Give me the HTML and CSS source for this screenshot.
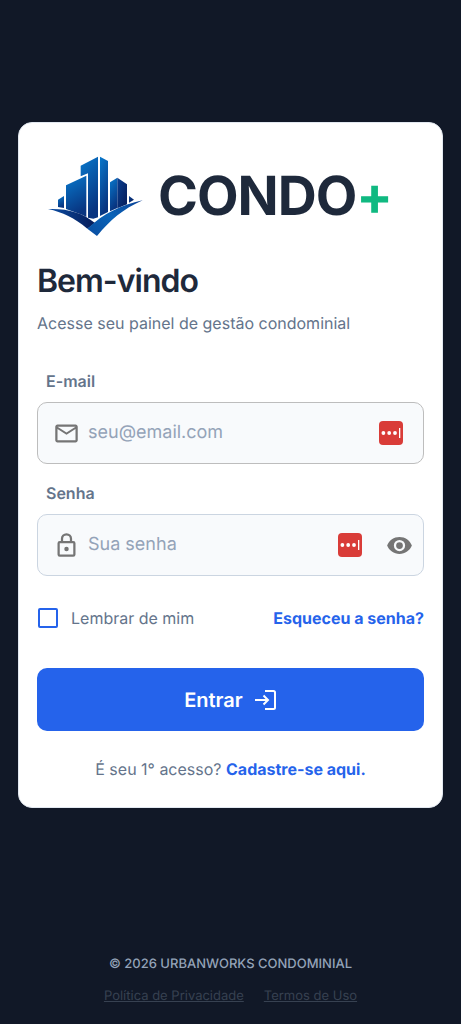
FILE: index.html
```html
<!DOCTYPE html>
<html lang="pt-BR">
<head>
<meta charset="utf-8">
<meta name="viewport" content="width=device-width, initial-scale=1">
<title>Condo+</title>
<link rel="stylesheet" href="styles.css">
</head>
<body>
<main class="main">
  <section class="card">
    <div class="brand">
      <svg class="brand-mark" viewBox="24 24 288 246" aria-hidden="true">
        <defs>
          <linearGradient id="tower" x1="0" y1="0" x2="0.3" y2="1"><stop offset="0" stop-color="#0878cc"/><stop offset="1" stop-color="#083480"/></linearGradient>
          <linearGradient id="dark" x1="0" y1="0" x2="1" y2="1"><stop offset="0" stop-color="#0a3f91"/><stop offset="1" stop-color="#061c58"/></linearGradient>
          <linearGradient id="left" x1="0" y1="0" x2="1" y2="0"><stop offset="0" stop-color="#0b4ea5"/><stop offset="1" stop-color="#051b58"/></linearGradient>
          <linearGradient id="right" x1="1" y1="0" x2="0" y2="1"><stop offset="0" stop-color="#0a3f94"/><stop offset="0.5" stop-color="#0963b8"/><stop offset="1" stop-color="#0a4da0"/></linearGradient>
        </defs>
        <path fill="url(#tower)" d="M54 155l18-11v36l-18-3z"/>
        <path fill="url(#tower)" d="M78 112l61-29v124l-11-6-50-18z"/>
        <path fill="url(#tower)" d="M122 53l52-27v182l-14 4-16-3V76l-22 9z"/>
        <path fill="url(#tower)" d="M180 26l24 13v153l-24 12z"/>
        <path fill="url(#tower)" d="M210 103l22-14v91l-22 10z"/>
        <path fill="url(#dark)" d="M232 89l29 20v60l-29 12z"/>
        <path fill="url(#dark)" d="M267 144l15 11-15 9z"/>
        <path fill="url(#left)" d="M24 183c60-2 103 11 141 42l-23 17C103 209 68 193 24 183z"/>
        <path fill="url(#right)" d="M308 157c-65 14-116 39-166 85l29 22c41-49 77-80 137-107z"/>
      </svg>
      <span class="brand-name">CONDO<span class="plus">+</span></span>
    </div>
    <h1 class="title">Bem-vindo</h1>
    <p class="subtitle">Acesse seu painel de gestão condominial</p>
    <form class="form">
      <label class="label" for="email">E-mail</label>
      <div class="field field-email">
        <svg class="icon" viewBox="0 0 24 24" aria-hidden="true"><path d="M22 6c0-1.100-.9-2-2-2H4c-1.100 0-2 .9-2 2v12c0 1.100.9 2 2 2h16c1.100 0 2-.9 2-2V6zm-2 0l-8 5-8-5h16zm0 12H4V8l8 5 8-5v10z"/></svg>
        <input class="input" id="email" type="email" placeholder="seu@email.com">
        <svg class="vault" viewBox="0 0 24 24" aria-hidden="true"><rect width="24" height="24" rx="4" fill="#d93c38"/><path fill="#fff" d="M2.500 12a1.900 1.900 0 1 0 3.800 0 1.900 1.900 0 1 0-3.800 0zm5.800 0a1.900 1.900 0 1 0 3.800 0 1.900 1.900 0 1 0-3.800 0zm5.800 0a1.900 1.900 0 1 0 3.800 0 1.900 1.900 0 1 0-3.800 0zM20 7h1.300v10H20z"/></svg>
      </div>
      <label class="label" for="senha">Senha</label>
      <div class="field field-password">
        <svg class="icon" viewBox="0 0 24 24" aria-hidden="true"><path d="M18 8h-1V6A5 5 0 0 0 7 6v2H6a2 2 0 0 0-2 2v10a2 2 0 0 0 2 2h12a2 2 0 0 0 2-2V10a2 2 0 0 0-2-2zM9 6a3 3 0 0 1 6 0v2H9V6zm9 14H6V10h12v10zm-6-3a2 2 0 1 0 0-4 2 2 0 0 0 0 4z"/></svg>
        <input class="input" id="senha" type="password" placeholder="Sua senha">
        <svg class="vault" viewBox="0 0 24 24" aria-hidden="true"><rect width="24" height="24" rx="4" fill="#d93c38"/><path fill="#fff" d="M2.500 12a1.900 1.900 0 1 0 3.800 0 1.900 1.900 0 1 0-3.800 0zm5.800 0a1.900 1.900 0 1 0 3.800 0 1.900 1.900 0 1 0-3.800 0zm5.800 0a1.900 1.900 0 1 0 3.800 0 1.900 1.900 0 1 0-3.800 0zM20 7h1.300v10H20z"/></svg>
        <button class="reveal" type="button" aria-label="Mostrar senha"><svg class="icon" viewBox="0 0 24 24" aria-hidden="true"><path d="M12 4.500C7 4.500 2.730 7.610 1 12c1.730 4.390 6 7.500 11 7.500s9.270-3.110 11-7.500c-1.730-4.390-6-7.500-11-7.500zM12 17a5 5 0 1 1 0-10 5 5 0 0 1 0 10zm0-8a3 3 0 1 0 0 6 3 3 0 0 0 0-6z"/></svg></button>
      </div>
      <div class="options">
        <label class="remember"><input class="check" type="checkbox">Lembrar de mim</label>
        <a class="link" href="#">Esqueceu a senha?</a>
      </div>
      <button class="submit" type="submit">Entrar
        <svg class="submit-icon" viewBox="0 0 24 24" aria-hidden="true"><path d="M12 3h8.500a1.500 1.500 0 0 1 1.500 1.500v15a1.500 1.500 0 0 1-1.500 1.500H12M2 12h13M10.500 7.500L15 12l-4.500 4.500"/></svg>
      </button>
    </form>
    <p class="signup">É seu 1° acesso? <a class="link" href="#">Cadastre-se aqui.</a></p>
  </section>
</main>
<footer class="footer">
  <p class="copyright">© 2026 URBANWORKS CONDOMINIAL</p>
  <nav class="legal"><a class="legal-link" href="#">Política de Privacidade</a><a class="legal-link" href="#">Termos de Uso</a></nav>
</footer>
</body>
</html>
```
FILE: styles.css
```css
* { box-sizing: border-box; }
body {
  display: flex;
  flex-direction: column;
  min-height: 100vh;
  margin: 0;
  background: #111827;
  color: #64748b;
  font: 16px/24px Inter, "Liberation Sans", sans-serif;
  text-rendering: geometricPrecision;
}
h1, p { margin: 0; }
button, input { font: inherit; text-rendering: inherit; }
.main {
  display: flex;
  flex: 1;
  align-items: center;
  justify-content: center;
  padding: 18px;
}
.card {
  width: 100%;
  max-width: 450px;
  padding: 33px 18px 26px;
  border: 1px solid #e2e8f0;
  border-radius: 14px;
  background: #fff;
}
.brand {
  display: flex;
  align-items: center;
  gap: 14px;
  margin-left: 11px;
}
.brand-mark { flex: none; width: 96px; height: 82px; }
.brand-name {
  color: #1e293b;
  font-size: 54px;
  font-weight: 700;
  line-height: 64px;
  letter-spacing: -1px;
}
.plus { color: #10b981; }
.title {
  margin-top: 23px;
  color: #1e293b;
  font-size: 32px;
  font-weight: 600;
  line-height: 40px;
  letter-spacing: -1px;
}
.subtitle { margin-top: 10px; }
.form { margin-top: 34px; }
.label {
  display: block;
  margin-left: 9px;
  font-weight: 600;
}
.field {
  display: flex;
  align-items: center;
  height: 62px;
  margin: 9px 0 17px;
  padding-left: 15px;
  border: 1px solid #cbd5e1;
  border-radius: 10px;
  background: #f8fafc;
}
.field-email { padding-right: 20px; border-color: #bdbdbd; }
.field-password { padding-right: 10px; }
.icon {
  display: block;
  flex: none;
  width: 27px;
  height: 27px;
  fill: #757575;
}
.input {
  flex: 1;
  min-width: 0;
  padding: 0 8px;
  border: 0;
  outline: 0;
  background: transparent;
  color: #1e293b;
  font-size: 18px;
}
.input::placeholder { color: #94a3b8; opacity: 1; }
.vault { flex: none; width: 24px; height: 24px; }
.reveal {
  margin-left: 24px;
  padding: 0;
  border: 0;
  background: transparent;
}
.options {
  display: flex;
  align-items: center;
  justify-content: space-between;
  margin-top: 30px;
}
.remember { display: flex; align-items: center; gap: 13px; }
.check {
  appearance: none;
  width: 20px;
  height: 20px;
  margin: 0 0 0 1px;
  border: 2px solid #2563eb;
  border-radius: 2px;
}
.check:checked { background: #2563eb; }
.link { color: #2563eb; font-weight: 700; text-decoration: none; }
.submit {
  display: flex;
  align-items: center;
  justify-content: center;
  gap: 10px;
  width: 100%;
  height: 63px;
  margin-top: 38px;
  padding: 0;
  border: 0;
  border-radius: 10px;
  background: #2563eb;
  color: #fff;
  font-size: 20px;
  font-weight: 600;
}
.submit-icon {
  width: 24px;
  height: 24px;
  fill: none;
  stroke: #fff;
  stroke-width: 2;
}
.signup { margin-top: 26px; text-align: center; }
.footer { padding: 24px 16px 16px; font-size: 13px; text-align: center; }
.copyright { line-height: 20px; color: #94a3b8; font-weight: 500; }
.legal { display: flex; justify-content: center; gap: 20px; margin-top: 10px; }
.legal-link { color: #374151; }
```
